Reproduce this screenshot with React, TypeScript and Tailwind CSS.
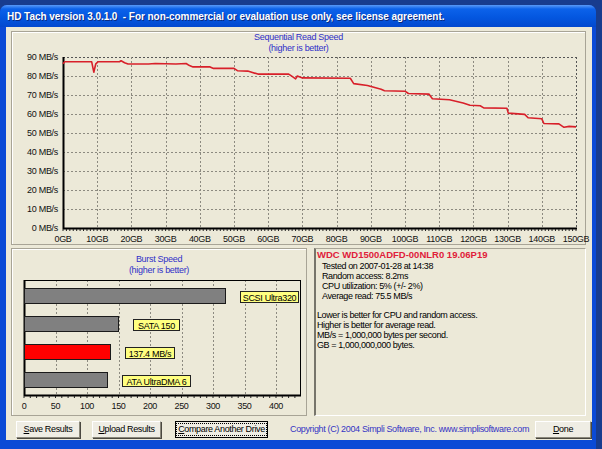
import React from 'react';

// read speed samples: [GB, MB/s]
const READ_DATA: [number, number][] = [
    [0, 86.5], [0.5, 87.5], [8.4, 87.5], [9, 82], [9.6, 86.4], [10.2, 87.5], [16.5, 87.5], [17, 88],
    [18, 87], [19, 86.3], [25, 86.3], [27, 86.6], [33, 86.3], [36, 86.6], [37, 85.5], [38, 84.8],
    [43, 84.8], [44, 84], [50, 84], [51, 82.8], [54, 82.6], [57, 81], [66, 81], [67, 79.8],
    [68, 78.5], [68.5, 80], [70, 79], [84, 78.8], [85, 76], [89, 75], [93, 73], [94, 72.2],
    [100, 72], [101, 70.8], [107, 70.5], [108, 68], [113, 67.5], [117, 65.8], [119, 64.6],
    [122, 64.3], [123, 63.2], [129.8, 63], [130.2, 60.5], [135, 59.8], [136, 58], [140, 57.5],
    [140.6, 55], [145, 54.8], [146.5, 53], [148, 53.5], [150, 53.2],
];

const BURST_BARS = [
    { y: 288, value: 320, fill: '#808080', label: 'SCSI Ultra320', lx: 240, lw: 58 },
    { y: 316, value: 150, fill: '#808080', label: 'SATA 150', lx: 133, lw: 46 },
    { y: 344, value: 137.4, fill: '#ff0000', label: '137.4 MB/s', lx: 125, lw: 49 },
    { y: 372, value: 132, fill: '#808080', label: 'ATA UltraDMA 6', lx: 122, lw: 68 },
];

const FONT = 'Liberation Sans, Arial, sans-serif';

const gx = (gb: number) => 63 + gb * 3.42;
const gy = (mb: number) => 228 - mb * 1.9;
const bx = (mb: number) => 24 + mb * 0.63;

const ReadChart: React.FC = () => {
    const line = READ_DATA.map(([g, v]) => `${gx(g).toFixed(1)},${gy(v).toFixed(1)}`).join(' ');
    return (
        <svg width={573} height={190} viewBox="12 54 573 190" className="block overflow-visible">
            {/* grid */}
            {Array.from({ length: 9 }, (_, k) => (
                <line key={'h' + k} x1={63} x2={576} y1={57.5 + k * 19} y2={57.5 + k * 19}
                    stroke={k === 0 ? '#555' : '#8c8a80'} strokeDasharray="2 2" shapeRendering="crispEdges" />
            ))}
            {Array.from({ length: 15 }, (_, k) => (
                <line key={'v' + k} x1={Math.round(gx((k + 1) * 10)) + 0.5} x2={Math.round(gx((k + 1) * 10)) + 0.5} y1={57} y2={228}
                    stroke={k === 14 ? '#555' : '#8c8a80'} strokeDasharray="2 2" shapeRendering="crispEdges" />
            ))}
            {/* axes */}
            <line x1={63.5} x2={63.5} y1={57} y2={229} stroke="#000" strokeWidth={2} />
            <line x1={63} x2={577} y1={228.5} y2={228.5} stroke="#000" strokeWidth={2} />
            {Array.from({ length: 151 }, (_, k) => (
                <line key={'t' + k} x1={gx(k)} x2={gx(k)} y1={229} y2={231} stroke="#222" strokeWidth={1} />
            ))}
            {/* labels */}
            {Array.from({ length: 10 }, (_, k) => (
                <text key={'yl' + k} x={58} y={60 + (9 - k) * 19} textAnchor="end" fontFamily={FONT} fontSize={9} letterSpacing={-0.3} fill="#111">
                    {k * 10} MB/s
                </text>
            ))}
            {Array.from({ length: 16 }, (_, k) => (
                <text key={'xl' + k} x={gx(k * 10)} y={241.5} textAnchor="middle" fontFamily={FONT} fontSize={9} letterSpacing={-0.3} fill="#111">
                    {k * 10}GB
                </text>
            ))}
            <polyline points={line} fill="none" stroke="#d8202a" strokeWidth={1.6} strokeLinejoin="round" />
        </svg>
    );
};

const BurstChart: React.FC = () => (
    <svg width={294} height={138} viewBox="12 277 294 138" className="block overflow-visible">
        {Array.from({ length: 8 }, (_, k) => (
            <line key={'v' + k} x1={Math.round(bx((k + 1) * 50)) + 0.5} x2={Math.round(bx((k + 1) * 50)) + 0.5} y1={280} y2={395}
                stroke="#8c8a80" strokeDasharray="2 2" shapeRendering="crispEdges" />
        ))}
        <rect x={24.5} y={280.5} width={276} height={115} fill="none" stroke="#000" shapeRendering="crispEdges" />
        <line x1={24.5} x2={24.5} y1={280} y2={396} stroke="#000" strokeWidth={2} />
        <line x1={24} x2={301} y1={395.5} y2={395.5} stroke="#000" strokeWidth={2} />
        {Array.from({ length: 44 }, (_, k) => (
            <line key={'t' + k} x1={bx(k * 10)} x2={bx(k * 10)} y1={396} y2={398} stroke="#222" />
        ))}
        {BURST_BARS.map((b) => (
            <g key={b.label}>
                <rect x={24.5} y={b.y + 0.5} width={bx(b.value) - 24.5} height={15} fill={b.fill} stroke="#1a1a1a" shapeRendering="crispEdges" />
                <rect x={b.lx + 0.5} y={b.y + 3.5} width={b.lw} height={11} fill="#ffff80" stroke="#222" shapeRendering="crispEdges" />
                <text x={b.lx + b.lw / 2 + 0.5} y={b.y + 12.5} textAnchor="middle" fontFamily={FONT} fontSize={9} letterSpacing={-0.3} fill="#000">
                    {b.label}
                </text>
            </g>
        ))}
        {Array.from({ length: 9 }, (_, k) => (
            <text key={'xl' + k} x={bx(k * 50)} y={408.5} textAnchor="middle" fontFamily={FONT} fontSize={9} letterSpacing={-0.3} fill="#111">
                {k * 50}
            </text>
        ))}
    </svg>
);

const XpButton: React.FC<{ width: string; hot: string; rest: string; focused?: boolean; className?: string }> = ({ width, hot, rest, focused, className }) => (
    <button
        className={`${width} ${className ?? ''} h-[17px] shrink-0 flex items-center justify-center whitespace-nowrap text-[9px] tracking-[-0.35px] text-black bg-[#efede4] border ${focused ? 'border-black' : 'border-t-white border-l-white border-r-[#8a877a] border-b-[#8a877a] shadow-[1px_1px_0_#4a4840]'}`}
    >
        <span className={focused ? 'border border-dotted border-black px-[1px] leading-[11px]' : 'leading-[11px]'}>
            <span className="underline">{hot}</span>
            {rest}
        </span>
    </button>
);

const App: React.FC = () => {
    return (
        <div className="w-[602px] h-[449px] bg-[#183c8e] overflow-hidden font-['Liberation_Sans',Arial,sans-serif]">
            <div className="mt-[5px] w-[596px] h-[444px] flex flex-col rounded-t-[7px] overflow-hidden bg-[#0b4ad6]">
                {/* title bar */}
                <div className="h-[22px] shrink-0 flex items-center pl-[7px] bg-[linear-gradient(to_bottom,#5a9af8_0%,#0c62ea_18%,#0457e0_55%,#0349cf_100%)]">
                    <span className="text-white font-bold text-[10px] tracking-[-0.05px] whitespace-pre [text-shadow:1px_1px_0_#0a2a80]">
                        HD Tach version 3.0.1.0  - For non-commercial or evaluation use only, see license agreement.
                    </span>
                </div>

                {/* client area */}
                <div className="ml-[6px] mr-[4px] h-[413px] bg-[#ece9d8] pl-[5px] pr-[6px] pt-[4px] flex flex-col text-black">
                    {/* read speed */}
                    <div className="h-[214px] border border-[#a8a496] shadow-[inset_1px_1px_0_#fff] flex flex-col">
                        <div className="h-[22px] flex flex-col items-center text-[9px] leading-[11px] tracking-[-0.3px] text-[#3030c8]">
                            <span>Sequential Read Speed</span>
                            <span>(higher is better)</span>
                        </div>
                        <ReadChart />
                    </div>

                    <div className="mt-[3px] h-[168px] flex gap-[7px]">
                        {/* burst speed */}
                        <div className="w-[296px] border border-[#a8a496] shadow-[inset_1px_1px_0_#fff] flex flex-col">
                            <div className="h-[28px] pt-[5px] flex flex-col items-center text-[9px] leading-[11px] tracking-[-0.3px] text-[#3030c8]">
                                <span>Burst Speed</span>
                                <span>(higher is better)</span>
                            </div>
                            <BurstChart />
                        </div>

                        {/* drive info */}
                        <div className="flex-1 border-t border-t-[#a8a496] border-l-[2px] border-l-[#77756b] border-r border-r-white border-b border-b-white pl-[1px] text-[9px] leading-[10px] tracking-[-0.4px]">
                            <p className="text-[#e0203a] font-bold text-[9.5px] tracking-[0px] leading-[12px]">WDC WD1500ADFD-00NLR0 19.06P19</p>
                            <div className="pl-[5px]">
                                <p>Tested on 2007-01-28 at 14:38</p>
                                <p>Random access: 8.2ms</p>
                                <p>CPU utilization: 5% (+/- 2%)</p>
                                <p>Average read: 75.5 MB/s</p>
                            </div>
                            <div className="mt-[9px]">
                                <p>Lower is better for CPU and random access.</p>
                                <p>Higher is better for average read.</p>
                                <p>MB/s = 1,000,000 bytes per second.</p>
                                <p>GB = 1,000,000,000 bytes.</p>
                            </div>
                        </div>
                    </div>

                    {/* buttons */}
                    <div className="mt-[5px] h-[17px] flex items-center">
                        <XpButton width="w-[64px]" hot="S" rest="ave Results" className="ml-[5px]" />
                        <XpButton width="w-[69px]" hot="U" rest="pload Results" className="ml-[12px]" />
                        <XpButton width="w-[93px]" hot="C" rest="ompare Another Drive" className="ml-[14px]" focused />
                        <span className="ml-[22px] whitespace-nowrap text-[9px] tracking-[-0.35px] text-[#3434c4]">
                            Copyright (C) 2004 Simpli Software, Inc. www.simplisoftware.com
                        </span>
                        <XpButton width="w-[56px]" hot="D" rest="one" className="ml-auto -mr-[5px]" />
                    </div>
                </div>
            </div>
        </div>
    );
};

export default App;
